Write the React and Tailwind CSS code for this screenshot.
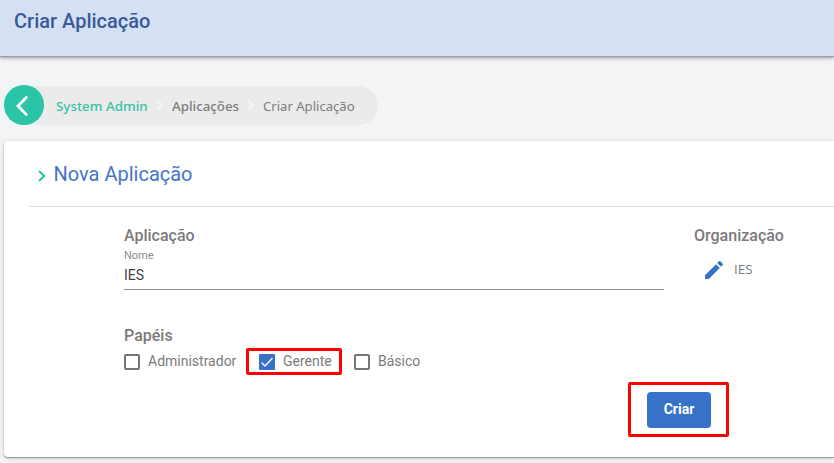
import React from "react";

function Header() {
  return (
    <header className="relative z-10 h-14 shrink-0 bg-[#d5e1f2] pl-3.5 pt-[7px] shadow-[0_1px_1px_#9b9fa2,0_2px_4px_rgba(0,0,0,0.35)]">
      <h1 className="text-[20px] leading-7 font-medium whitespace-nowrap text-[#3a5a9b]">Criar Aplicação</h1>
    </header>
  );
}

function CrumbArrow({ className }) {
  return (
    <svg className={className} width="8" height="12" viewBox="0 0 8 12" fill="none" stroke="#f6f7f8" strokeWidth="2">
      <path d="M1 1l5 5-5 5" />
    </svg>
  );
}

function Breadcrumb() {
  return (
    <nav className="mt-[29px] ml-1 flex h-10 w-[374px] items-center">
      <div className="flex h-[39px] w-full items-center rounded-r-full rounded-l-full bg-[#ebebeb] font-['Noto_Sans','Open_Sans',sans-serif] text-[13.1px] whitespace-nowrap text-[#7c7c7c]">
        <button className="flex size-10 shrink-0 items-center justify-center rounded-full bg-[#29c5a6]">
          <svg width="40" height="40" viewBox="0 0 40 40" fill="none" stroke="#fff" strokeWidth="2.8" strokeLinecap="round">
            <path d="M22.3 12.5l-8.3 8.5 8.3 8.5" />
          </svg>
        </button>
        <span className="ml-3 w-[92px] pt-[3px] text-[13.4px] font-medium text-[#36c2a5]">System Admin</span>
        <CrumbArrow className="ml-2 shrink-0" />
        <span className="ml-2 w-[67px] pt-[3px] text-[13.3px] font-medium">Aplicações</span>
        <CrumbArrow className="ml-2 shrink-0" />
        <span className="ml-2 pt-[3px]">Criar Aplicação</span>
      </div>
    </nav>
  );
}

function Checkbox({ label, checked, className = "" }) {
  return (
    <label className={"relative flex h-[27px] items-center gap-2 " + className}>
      {checked ? (
        <svg width="16" height="16" viewBox="0 0 16 16">
          <rect width="16" height="16" rx="1" fill="#3871c8" />
          <path d="M2.5 8.5l3.5 3.5 7.5-8" fill="none" stroke="#fff" strokeWidth="1.3" />
        </svg>
      ) : (
        <span className="size-4 rounded-[2px] border-2 border-[#757575]" />
      )}
      <span className="pb-0.5 text-[14px] leading-5 whitespace-nowrap">{label}</span>
      {checked && <span className="absolute top-0 -left-[13px] h-[27px] w-[96px] rounded-[2px] border-3 border-[#fe0000]" />}
    </label>
  );
}

function Panel() {
  return (
    <main className="mt-[16px] ml-1 h-[316px] rounded-l-[4px] bg-white pt-[19px] pl-[25px] shadow-[0_1px_1px_#999,0_1px_4px_rgba(0,0,0,0.2)]">
      <h2 className="flex h-[47px] items-start border-b border-[#dedede] text-[20px] leading-7 text-[#4674c8]">
        <svg className="mt-2.5 ml-[9px] mr-[7.5px]" width="8" height="12" viewBox="0 0 8 12" fill="none" stroke="#2ac2a3" strokeWidth="2">
          <path d="M1 1l5.2 5L1 11" />
        </svg>
        <span className="whitespace-nowrap">Nova Aplicação</span>
      </h2>
      <div className="ml-[95px] flex h-[117px] pt-[17px]">
        <section className="w-[540px]">
          <h3 className="text-[16px] leading-6 font-medium">Aplicação</h3>
          <div className="h-[42px] border-b border-[#8b8b8b] pt-px">
            <div className="text-[11px] leading-[14px] text-[#8b8b8b]">Nome</div>
            <div className="pt-[2px] text-[14px] leading-5 text-[#444]">IES</div>
          </div>
        </section>
        <section className="ml-[30px]">
          <h3 className="text-[16px] leading-6 font-medium">Organização</h3>
          <div className="flex h-11 items-center">
            <svg className="ml-2 size-6" viewBox="0 0 24 24" fill="#3871c8">
              <path d="M3 17.25V21h3.75L17.81 9.94l-3.75-3.75L3 17.25zM20.71 7.04a1 1 0 0 0 0-1.41l-2.34-2.34a1 1 0 0 0-1.41 0l-1.83 1.83 3.75 3.75 1.83-1.83z" />
            </svg>
            <span className="ml-2 pb-0.5 font-['Open_Sans',sans-serif] text-[13.5px] font-medium">IES</span>
          </div>
        </section>
      </div>
      <section className="ml-[95px]">
        <h3 className="text-[16px] leading-6 font-medium">Papéis</h3>
        <div className="flex">
          <Checkbox label="Administrador" className="w-[135px]" />
          <Checkbox label="Gerente" checked className="w-[95px]" />
          <Checkbox label="Básico" />
        </div>
        <div className="mt-[7px] ml-[504px] h-[55px] w-[101px] rounded-[2px] border-3 border-[#fe0000] pt-[7px] pl-4">
          <button className="block h-9 w-16 rounded-[4px] bg-[#3871c8] pb-0.5 text-[14px] font-bold text-white">Criar</button>
        </div>
      </section>
    </main>
  );
}

export default function App() {
  return (
    <div className="flex h-[463px] w-full flex-col overflow-hidden bg-[#f3f4f6] font-[Roboto,sans-serif] text-[#7b7b7b]">
      <Header />
      <Breadcrumb />
      <Panel />
    </div>
  );
}
